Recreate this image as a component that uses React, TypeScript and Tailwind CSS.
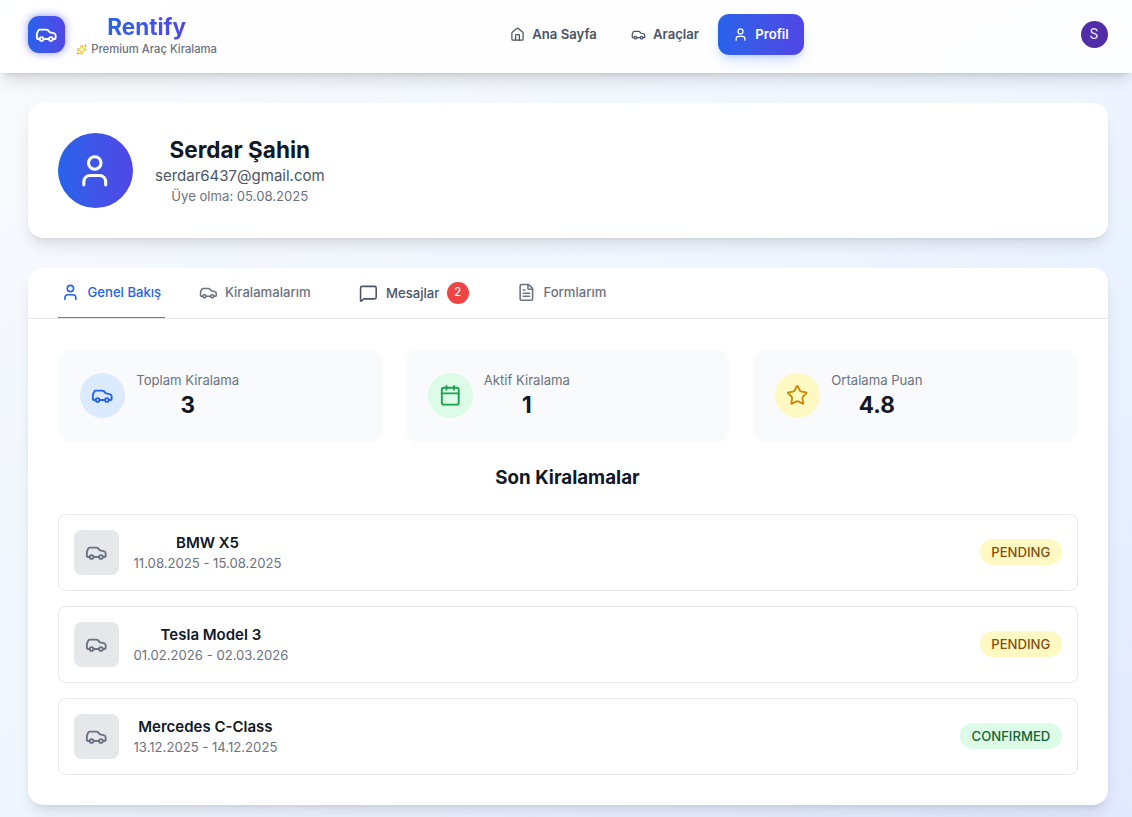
import React from "react";
import { Calendar, Car, FileText, House, MessageSquare, Sparkles, Star, User } from "lucide-react";

const stats = [
  { label: "Toplam Kiralama", value: "3", icon: Car, tone: "bg-[#dbeafe] text-[#2563eb]" },
  { label: "Aktif Kiralama", value: "1", icon: Calendar, tone: "bg-[#dcfce7] text-[#16a34a]" },
  { label: "Ortalama Puan", value: "4.8", icon: Star, tone: "bg-[#fef9c3] text-[#ca8a04]" },
];

const rentals = [
  { name: "BMW X5", dates: "11.08.2025 - 15.08.2025", status: "PENDING" },
  { name: "Tesla Model 3", dates: "01.02.2026 - 02.03.2026", status: "PENDING" },
  { name: "Mercedes C-Class", dates: "13.12.2025 - 14.12.2025", status: "CONFIRMED" },
];

function Header() {
  return (
    <header className="relative h-[73px] bg-white/90 pr-[24.5px] pl-[27.5px] shadow-[0_10px_15px_-3px_rgba(0,0,0,0.13),0_4px_6px_-4px_rgba(0,0,0,0.15)]">
      <div className="flex h-[69px] items-center justify-between">
        <div className="flex items-center gap-3">
          <div className="flex size-10 items-center justify-center rounded-[11px] bg-linear-to-r from-[#2563eb] to-[#4f46e5] text-white shadow-[0_0_8px_rgba(79,70,229,0.6)]">
            <Car className="size-6" />
          </div>
          <div className="text-center">
            <div className="text-[22.5px] leading-[30px] font-bold text-transparent">
              <span className="bg-linear-to-r from-[#2563eb] to-[#4f46e5] bg-clip-text">Rentify</span>
            </div>
            <div className="flex items-center gap-1 pt-[0.9px] text-[11.25px] leading-[15px] font-medium text-[#6b7280]">
              <Sparkles className="size-3 text-[#eab308]" />
              Premium Araç Kiralama
            </div>
          </div>
        </div>
        <nav className="ml-px flex gap-1 text-[13.125px] leading-[18.75px] font-semibold text-[#4b5563]">
          <a className="flex items-center gap-2 px-4 py-3">
            <House className="size-4" />
            Ana Sayfa
          </a>
          <a className="flex items-center gap-2 px-4 py-3">
            <Car className="size-4" />
            Araçlar
          </a>
          <a className="flex items-center gap-2 rounded-[11.25px] bg-linear-to-r from-[#2563eb] to-[#4f46e5] px-4 py-3 text-white shadow-[0_8px_14px_-3px_rgba(59,130,246,0.25),0_4px_6px_-4px_rgba(59,130,246,0.25)]">
            <User className="size-4" />
            Profil
          </a>
        </nav>
        <div className="flex size-[27px] items-center justify-center rounded-full bg-[#512da8] font-[Roboto,sans-serif] text-[14px] text-[#ece6f7]">
          S
        </div>
      </div>
    </header>
  );
}

function Tabs() {
  return (
    <div className="flex h-[51px] gap-8 border-b border-[#e5e7eb] px-8 text-[13.125px] leading-[18.75px] font-medium text-[#6b7280]">
      <button className="flex items-center gap-2 border-b border-[#3b82f6] px-1 text-[#2563eb]">
        <User className="size-5" />
        Genel Bakış
      </button>
      <button className="flex items-center gap-2 border-b border-transparent px-1">
        <Car className="size-5" />
        Kiralamalarım
      </button>
      <button className="-mr-[0.4px] flex items-center gap-2 px-4 text-[#4b5563]">
        <MessageSquare className="size-5" />
        <span className="pl-[0.4px]">Mesajlar</span>
        <span className="flex size-[22px] items-center justify-center rounded-full bg-[#ef4444] pb-px text-[11.25px] leading-[15px] text-white">
          2
        </span>
      </button>
      <button className="flex items-center gap-2 border-b border-transparent px-1">
        <FileText className="size-5" />
        Formlarım
      </button>
    </div>
  );
}

export default function App() {
  return (
    <div className="h-[817px] overflow-hidden bg-linear-to-br from-[#f8fafc] via-[#eff6ff] to-[#e2e9ff] font-[Inter,sans-serif] [--spacing:3.75px]">
      <Header />
      <main className="flex flex-col gap-[30px] pt-[30px] pr-[24.5px] pl-[27.5px]">
        <section className="flex items-center gap-6 rounded-[15px] bg-white p-8 shadow-[0_10px_15px_-3px_rgba(0,0,0,0.1),0_4px_6px_-4px_rgba(0,0,0,0.1)]">
          <div className="flex size-20 items-center justify-center rounded-full bg-linear-to-r from-[#2563eb] to-[#4f46e5] text-white">
            <User className="size-10" />
          </div>
          <div className="text-center">
            <h1 className="text-[22.5px] leading-[30px] font-bold text-[#111827]">Serdar Şahin</h1>
            <p className="text-[15px] leading-[22.5px] text-[#4b5563]">serdar6437@gmail.com</p>
            <p className="text-[13.125px] leading-[18.75px] text-[#6b7280]">Üye olma: 05.08.2025</p>
          </div>
        </section>

        <section className="h-[537px] rounded-[15px] bg-white shadow-[0_10px_15px_-3px_rgba(0,0,0,0.1),0_4px_6px_-4px_rgba(0,0,0,0.1)]">
          <Tabs />
          <div className="px-8 pt-[29.75px]">
            <div className="grid grid-cols-3 gap-6">
              {stats.map(({ label, value, icon: Icon, tone }) => (
                <div key={label} className="flex items-center gap-3 rounded-[15px] bg-[#f9fafb] p-6">
                  <div className={`flex size-12 items-center justify-center rounded-full ${tone}`}>
                    <Icon className="size-6" />
                  </div>
                  <div className="text-center">
                    <p className="text-[13.125px] leading-[18.75px] text-[#6b7280]">{label}</p>
                    <p className="text-[22.5px] leading-[30px] font-bold text-[#111827]">{value}</p>
                  </div>
                </div>
              ))}
            </div>
            <h2 className="my-6 text-center text-[18.75px] leading-[26.25px] font-bold text-[#111827]">
              Son Kiralamalar
            </h2>
            <div className="flex flex-col gap-[15px]">
              {rentals.map(({ name, dates, status }) => (
                <div key={name} className="flex items-center justify-between rounded-[7.5px] border border-[#e5e7eb] p-4">
                  <div className="flex items-center gap-4">
                    <div className="flex size-12 items-center justify-center rounded-[7.5px] bg-[#e5e7eb] text-[#6b7280]">
                      <Car className="size-6" />
                    </div>
                    <div className="text-center">
                      <h3 className="text-[15px] leading-[22.5px] font-semibold text-[#111827]">{name}</h3>
                      <p className="text-[13.125px] leading-[18.75px] text-[#6b7280]">{dates}</p>
                    </div>
                  </div>
                  <span
                    className={`rounded-full px-3 py-1 text-[13.125px] leading-[18.75px] font-medium ${
                      status === "CONFIRMED" ? "bg-[#dcfce7] text-[#166534]" : "bg-[#fef9c3] text-[#854d0e]"
                    }`}
                  >
                    {status}
                  </span>
                </div>
              ))}
            </div>
          </div>
        </section>
      </main>
    </div>
  );
}
